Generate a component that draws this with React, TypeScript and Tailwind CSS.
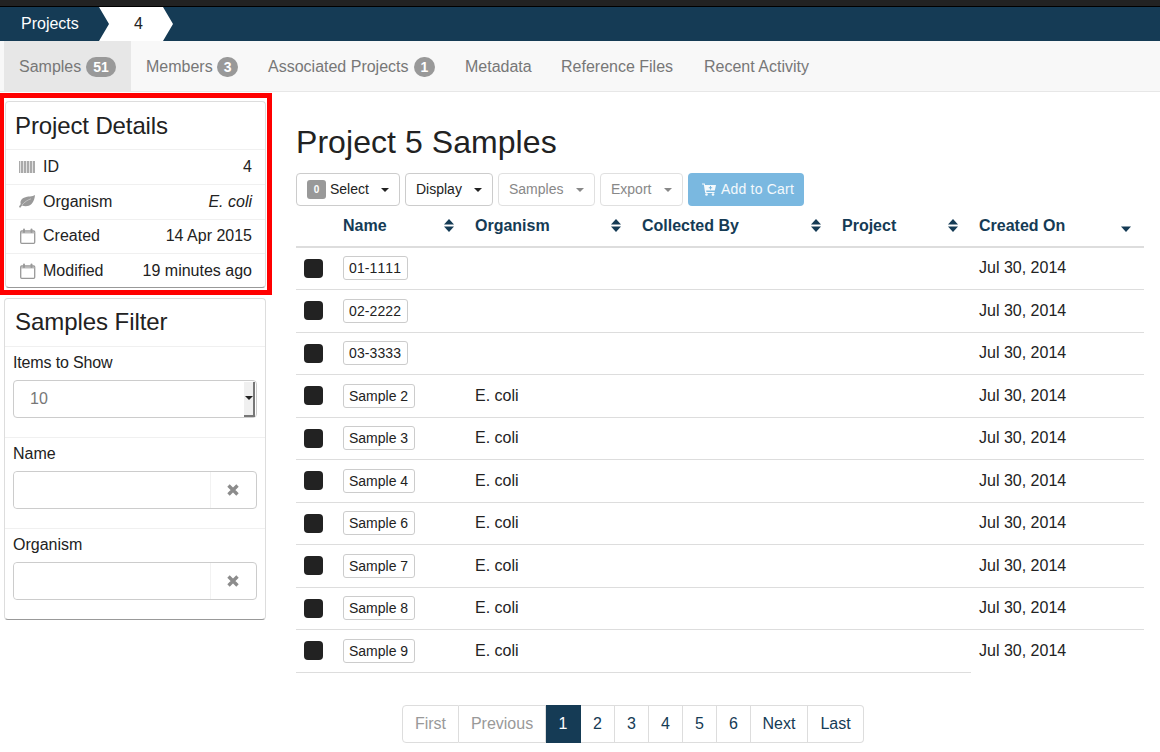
const font = { fontFamily: '"Liberation Sans", Arial, sans-serif' }

const navy = 'text-[#153b55]'

function BarcodeIcon() {
  const bars = [0, 2, 3, 5, 6, 8, 9, 11, 12, 14, 15]
  return (
    <svg width="16" height="12" viewBox="0 0 16 12" className="shrink-0">
      <rect width="16" height="12" fill="#e2e2e2" />
      {bars.map(x => <rect key={x} x={x} y="0" width="1" height="12" fill="#aaa" />)}
    </svg>
  )
}

function LeafIcon() {
  return (
    <svg width="16" height="13" viewBox="0 0 16 13" className="shrink-0">
      <path d="M16 0C13.500 1.800 9 1 5 2.800C1.800 4.300 1 7 1.800 9L0 11.500L1 13L3 10.500C6 11.800 10 11.500 12.500 9C14.800 6.800 15.800 3 16 0Z" fill="#999" />
      <path d="M3 10C5.500 7 8.500 5 12 3.800" stroke="#ccc" strokeWidth="0.8" fill="none" />
    </svg>
  )
}

function CalendarIcon() {
  return (
    <svg width="16" height="16" viewBox="0 0 16 16" className="ml-[1px] shrink-0">
      <rect x="0.700" y="3" width="14" height="12.300" rx="1" fill="none" stroke="#999" strokeWidth="1.300" />
      <rect x="1" y="4" width="13.500" height="1.500" fill="#bbb" />
      <rect x="3" y="0.500" width="2" height="4.500" rx="1" fill="#999" />
      <rect x="10.500" y="0.500" width="2" height="4.500" rx="1" fill="#999" />
    </svg>
  )
}

function CartIcon() {
  return (
    <svg width="14" height="13" viewBox="0 0 14 13" className="shrink-0">
      <path d="M0 0.500H2.800L3 2H14L12.800 7.500H4.200L4.400 9H12.500V10H3.200L1.800 1.500H0Z" fill="#f4f9fc" />
      <path d="M8.500 3V6.500M6.800 4.750H10.200" stroke="#7ab8e0" strokeWidth="1" />
      <circle cx="4.500" cy="11.500" r="1.300" fill="#f4f9fc" />
      <circle cx="11" cy="11.500" r="1.300" fill="#f4f9fc" />
    </svg>
  )
}

function RemoveIcon() {
  return (
    <svg width="12" height="12" viewBox="0 0 12 12">
      <path d="M1.500 1.500L10.500 10.500M10.500 1.500L1.500 10.500" stroke="#8c8c8c" strokeWidth="3.400" />
    </svg>
  )
}

function SortIcon({ downOnly }: { downOnly?: boolean }) {
  return (
    <svg width="10" height="13" viewBox="0 0 10 13" className="shrink-0">
      {!downOnly && <path d="M5 0L10 5.500H0Z" fill="#153b55" />}
      <path d="M0 7.500H10L5 13Z" fill="#153b55" />
    </svg>
  )
}

function Caret({ light }: { light?: boolean }) {
  return (
    <span className={`inline-block w-0 h-0 border-x-[4px] border-x-transparent border-t-[4px] ${light ? 'border-t-[#888]' : 'border-t-[#222]'}`} />
  )
}

function DetailRow({ icon, label, children }: { icon: React.ReactNode; label: string; children: React.ReactNode }) {
  return (
    <div className="h-[34.75px] flex items-center border-t border-[#f0f0f0] pl-[13px] pr-[13px]">
      <span className="w-[24px] flex items-center">{icon}</span>
      <span className="flex-1">{label}</span>
      {children}
    </div>
  )
}

function FilterInput({ label }: { label: string }) {
  return (
    <div className="h-[91px] border-t border-[#f0f0f0] px-[8px] pt-[5px]">
      <p className="leading-[22px] mb-[6px]">{label}</p>
      <div className="h-[38px] flex border border-[#ccc] rounded-[4px]">
        <input className="flex-1 min-w-0 outline-none bg-white rounded-l-[4px]" />
        <span className="w-[46px] pr-[1px] flex items-center justify-center border-l border-[#f2f2f2]"><RemoveIcon /></span>
      </div>
    </div>
  )
}

const columns = [
  { name: 'Name', width: 'w-[132px]' },
  { name: 'Organism', width: 'w-[167px]' },
  { name: 'Collected By', width: 'w-[200px]' },
  { name: 'Project', width: 'w-[137px]' },
  { name: 'Created On', width: 'w-[173px]', sorted: true },
]

const samples = [
  { name: '01-1111', organism: '' },
  { name: '02-2222', organism: '' },
  { name: '03-3333', organism: '' },
  { name: 'Sample 2', organism: 'E. coli' },
  { name: 'Sample 3', organism: 'E. coli' },
  { name: 'Sample 4', organism: 'E. coli' },
  { name: 'Sample 6', organism: 'E. coli' },
  { name: 'Sample 7', organism: 'E. coli' },
  { name: 'Sample 8', organism: 'E. coli' },
  { name: 'Sample 9', organism: 'E. coli' },
]

const tabs = [
  { name: 'Samples', count: 51, width: 'w-[127px]', gap: 'gap-[5px]', active: true },
  { name: 'Members', count: 3, width: 'w-[122px]', gap: 'gap-[4px]' },
  { name: 'Associated Projects', count: 1, width: 'w-[197px]', gap: 'gap-[5px]' },
  { name: 'Metadata', width: 'w-[96px]' },
  { name: 'Reference Files', width: 'w-[143px]' },
  { name: 'Recent Activity', width: 'w-[136px]' },
]

const toolbar = [
  { name: 'Display', width: 'w-[88px]' },
  { name: 'Samples', width: 'w-[97px]', light: true },
  { name: 'Export', width: 'w-[83px]', light: true },
]

const pages = [
  { label: 'First', width: 'w-[57px]', disabled: true },
  { label: 'Previous', width: 'w-[87px]', disabled: true },
  { label: '1', width: 'w-[35px]', active: true },
  { label: '2', width: 'w-[34px]' },
  { label: '3', width: 'w-[34px]' },
  { label: '4', width: 'w-[34px]' },
  { label: '5', width: 'w-[34px]' },
  { label: '6', width: 'w-[34px]' },
  { label: 'Next', width: 'w-[57px]' },
  { label: 'Last', width: 'w-[56px]' },
]

export default function App() {
  return (
    <div style={font} className="w-[1160px] h-[752px] overflow-hidden bg-white text-[16px] text-[#222]">
      {/* Top bar */}
      <div className="h-[6px] bg-[#222]" />
      <div className="h-[1px] bg-black" />
      <div className="h-[34px] bg-[#153b55] flex items-center">
        <span className="w-[99px] pl-[21px] text-white">Projects</span>
        <span className="w-[74px] h-full bg-white flex items-center pl-[35px] [clip-path:polygon(0_0,64px_0,100%_50%,64px_100%,0_100%,10px_50%)]">4</span>
      </div>

      {/* Tabs */}
      <div className="h-[51px] bg-[#f8f8f8] border-b border-[#e7e7e7] pl-[4px] flex">
        {tabs.map(t => (
          <div key={t.name} className={`${t.width} ${t.gap ?? ''} h-[50px] pl-[15px] pt-[1px] flex items-center text-[#777] ${t.active ? 'bg-[#e7e7e7]' : ''}`}>
            {t.name}
            {t.count !== undefined && (
              <span className="h-[20px] px-[7px] rounded-[10px] bg-[#999] text-white text-[14px] font-bold leading-[20px]">{t.count}</span>
            )}
          </div>
        ))}
      </div>

      <div className="flex">
        {/* Sidebar */}
        <aside className="w-[296px] shrink-0 pt-[1px]">
          <div className="w-[272px] h-[202px] border-y-[5px] border-r-[5px] border-l-[4px] border-[#ff0000] pl-[1px] pt-[3px] pb-[2px] pr-[1px]">
            <div className="h-full border border-[#ddd] border-b-[#999] rounded-[4px] bg-white">
              <h2 className="h-[47px] flex items-center pl-[9px] text-[24px] tracking-[-0.12px]">Project Details</h2>
              <DetailRow icon={<BarcodeIcon />} label="ID">4</DetailRow>
              <DetailRow icon={<LeafIcon />} label="Organism"><em>E. coli</em></DetailRow>
              <DetailRow icon={<CalendarIcon />} label="Created">14 Apr 2015</DetailRow>
              <DetailRow icon={<CalendarIcon />} label="Modified">19 minutes ago</DetailRow>
            </div>
          </div>
          <div className="ml-[4px] w-[262px] h-[322px] mt-[3px] border border-[#ddd] border-b-[#999] rounded-[4px] bg-white">
            <h2 className="h-[47px] pb-[2px] flex items-center pl-[10px] text-[24px] tracking-[-0.06px]">Samples Filter</h2>
            <div className="h-[91px] border-t border-[#f0f0f0] px-[8px] pt-[5px]">
              <p className="leading-[22px] mb-[6px] tracking-[-0.15px]">Items to Show</p>
              <div className="h-[38px] flex items-center justify-between border border-[#ccc] rounded-[4px] pl-[16px] text-[#777]">
                10
                <span className="w-[11px] h-[35px] mr-[1px] bg-[#f0f0f0] border-r-2 border-b-2 border-[#777] flex items-center justify-center">
                  <Caret />
                </span>
              </div>
            </div>
            <FilterInput label="Name" />
            <FilterInput label="Organism" />
          </div>
        </aside>

        {/* Main */}
        <main className="w-[848px] shrink-0">
          <h1 className="h-[81px] pt-[30px] text-[32px] leading-[40px] tracking-[0.06px]">Project 5 Samples</h1>

          <div className="h-[33px] flex gap-[5px] text-[14px]">
            <button className="w-[104px] flex items-center justify-between px-[10px] border border-[#ccc] rounded-[4px]">
              <span className="flex items-center gap-[4px]">
                <span className="w-[19px] h-[19px] flex items-center justify-center rounded-[3px] bg-[#999] text-white text-[10px] font-bold">0</span>
                Select
              </span>
              <Caret />
            </button>
            {toolbar.map(b => (
              <button key={b.name} className={`${b.width} flex items-center justify-between px-[10px] border rounded-[4px] ${b.light ? 'border-[#e0e0e0] text-[#888]' : 'border-[#ccc]'}`}>
                {b.name}
                <Caret light={b.light} />
              </button>
            ))}
            <button className="w-[116px] flex items-center gap-[5px] pl-[14px] rounded-[4px] bg-[#7ab8e0] text-[#f4f9fc] tracking-[0.2px]">
              <CartIcon />
              Add to Cart
            </button>
          </div>

          {/* Table */}
          <div className="flex h-[41.5px] border-b-2 border-[#ddd]">
            <div className="w-[39px]" />
            {columns.map(c => (
              <div key={c.name} className={`${c.width} flex items-center justify-between pl-[8px] pr-[13px] font-bold ${navy}`}>
                {c.name}
                <SortIcon downOnly={c.sorted} />
              </div>
            ))}
          </div>
          {samples.map((s, i) => {
            const line = 'border-b border-[#ddd]'
            const last = i === samples.length - 1
            return (
              <div key={s.name} className="flex h-[42.5px]">
                <div className={`w-[39px] flex items-center pl-[8px] ${line}`}>
                  <span className="w-[19px] h-[19px] rounded-[4px] bg-[#222]" />
                </div>
                <div className={`w-[132px] flex items-center pl-[8px] ${line}`}>
                  <span className={`h-[24px] pl-[5px] pr-[6px] border border-[#ccc] rounded-[3px] text-[14px] leading-[22px] [font-kerning:none] ${s.organism ? '' : 'tracking-[0.1px]'}`}>{s.name}</span>
                </div>
                <div className={`w-[167px] flex items-center pl-[8px] ${line}`}>{s.organism}</div>
                <div className={`w-[200px] ${line}`} />
                <div className={`w-[137px] ${line}`} />
                <div className={`w-[173px] flex items-center pl-[8px] ${last ? '' : line}`}>Jul 30, 2014</div>
              </div>
            )
          })}

          {/* Pagination */}
          <div className="mt-[32.5px] ml-[106px] flex h-[38px] w-max">
            {pages.map((p, i) => (
              <span
                key={p.label}
                className={`${p.width} flex items-center justify-center border-y border-r
                  ${i === 0 ? 'border-l rounded-l-[4px]' : ''} ${i === pages.length - 1 ? 'rounded-r-[4px]' : ''}
                  ${p.active ? 'bg-[#153b55] border-[#153b55] text-white' : 'border-[#ddd]'}
                  ${p.disabled ? 'text-[#999]' : ''} ${!p.active && !p.disabled ? navy : ''}`}
              >
                {p.label}
              </span>
            ))}
          </div>
        </main>
      </div>
    </div>
  )
}
